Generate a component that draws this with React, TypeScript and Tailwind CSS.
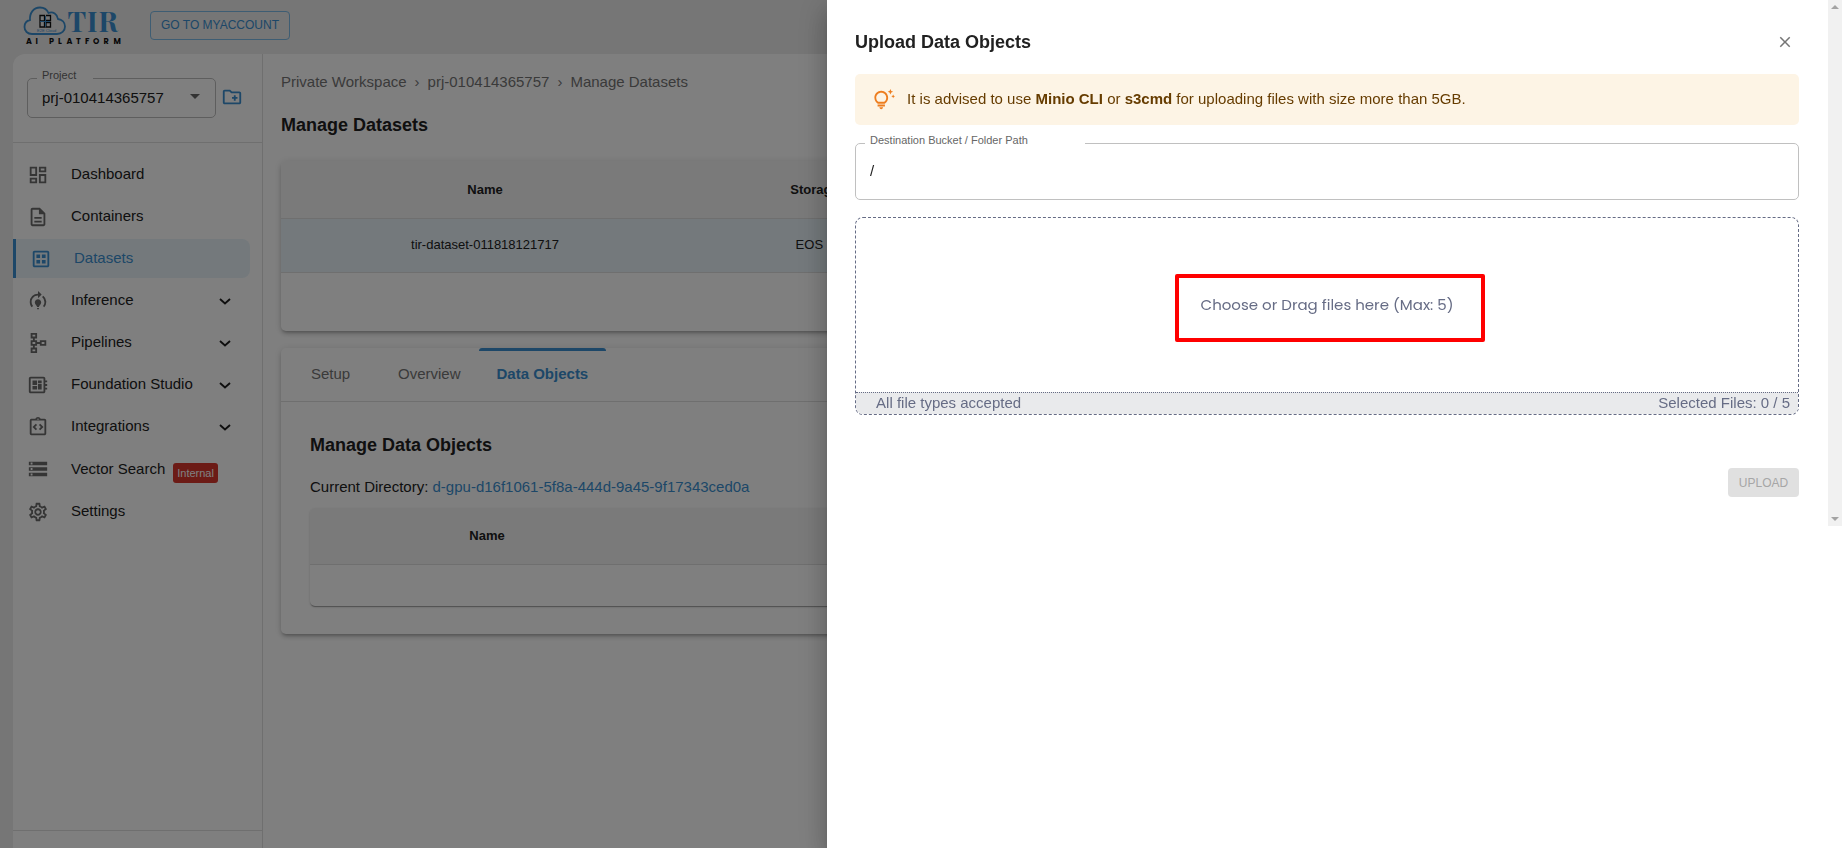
import React from "react";
import {
  MdClose,
  MdOutlineCreateNewFolder,
  MdOutlineDashboard,
  MdOutlineDataset,
  MdOutlineDescription,
  MdOutlineDeveloperBoard,
  MdOutlineIntegrationInstructions,
  MdOutlineModelTraining,
  MdOutlineSchema,
  MdOutlineSettings,
  MdOutlineTipsAndUpdates,
  MdStorage,
} from "react-icons/md";
import type { IconType } from "react-icons";

type NavItem = {
  label: string;
  icon: IconType;
  active?: boolean;
  expandable?: boolean;
  badge?: string;
};

const navItems: NavItem[] = [
  { label: "Dashboard", icon: MdOutlineDashboard },
  { label: "Containers", icon: MdOutlineDescription },
  { label: "Datasets", icon: MdOutlineDataset, active: true },
  { label: "Inference", icon: MdOutlineModelTraining, expandable: true },
  { label: "Pipelines", icon: MdOutlineSchema, expandable: true },
  { label: "Foundation Studio", icon: MdOutlineDeveloperBoard, expandable: true },
  { label: "Integrations", icon: MdOutlineIntegrationInstructions, expandable: true },
  { label: "Vector Search", icon: MdStorage, badge: "Internal" },
  { label: "Settings", icon: MdOutlineSettings },
];

const cardShadow =
  "shadow-[0_3px_3px_-2px_rgba(0,0,0,0.2),0_3px_4px_0_rgba(0,0,0,0.14),0_1px_8px_0_rgba(0,0,0,0.12)]";

function Logo() {
  return (
    <svg width="102" height="44" viewBox="0 0 102 44" role="img" aria-label="TIR AI Platform">
      <path
        d="M10 31C5.500 31 2.500 28 2.500 24C2.500 20.500 4.500 17.800 8 17C7.500 10 11.500 4.500 18 4.500C22 4.500 25 6.500 26.500 10C31 8 35.500 11.500 36 16C40 16.500 43 19.500 43 23.500C43 28 39.500 31 35 31Z"
        fill="none"
        stroke="#3a8fd0"
        strokeWidth="1.800"
      />
      <path
        d="M18 12.500H22.500V18H18ZM22.500 18V24H18V18.500M24 12.500H28.500V17.500H24M24 19.500H28.500V24H24Z"
        fill="none"
        stroke="#111111"
        strokeWidth="1.300"
      />
      <path d="M23.500 13V24M18 18.500H28" stroke="#3a8fd0" strokeWidth="1" />
      <text x="15" y="28.500" fontFamily="Liberation Sans" fontSize="4" fill="#3a8fd0">
        E2E Cloud
      </text>
      <text
        x="45.500 65 76.500"
        y="28.500"
        fontFamily="'Playfair Display', 'Liberation Serif', serif"
        fontWeight="700"
        fontSize="28"
        fill="#3a8fd0"
      >
        TIR
      </text>
      <text
        x="4 13.500 27 36 44.500 54 63 71 81.500 91.500"
        y="41"
        fontFamily="Poppins, 'Liberation Sans', sans-serif"
        fontWeight="700"
        fontSize="8"
        fill="#111111"
      >
        AIPLATFORM
      </text>
    </svg>
  );
}

function Chevron() {
  return (
    <svg width="20" height="20" viewBox="0 0 20 20" fill="none" aria-hidden="true">
      <path d="M5 8L10 12.500L15 8" stroke="#1f1f1f" strokeWidth="1.900" />
    </svg>
  );
}

function Sidebar() {
  return (
    <aside className="flex w-[250px] shrink-0 flex-col rounded-tl-xl border-r border-[#dedede] bg-white">
      <div className="flex h-[89px] items-start gap-[5px] border-b border-[#dedede] pt-6 pl-[14px]">
        <div className="relative">
          <label
            htmlFor="project"
            className="absolute -top-[9px] left-[10px] w-14 bg-white pl-[5px] text-[11px] leading-3 text-[#666666]"
          >
            Project
          </label>
          <select
            id="project"
            className="h-10 w-[189px] appearance-none rounded-[5px] border border-[#bdbdbd] bg-white px-[14px] text-[15px] text-[#212121]"
          >
            <option>prj-010414365757</option>
          </select>
          <svg
            className="pointer-events-none absolute top-4 right-4"
            width="10"
            height="5"
            viewBox="0 0 10 5"
            aria-hidden="true"
          >
            <path d="M0 0H10L5 5Z" fill="#666666" />
          </svg>
        </div>
        <button type="button" aria-label="Create project" className="mt-2 text-[#3a8fd0]">
          <MdOutlineCreateNewFolder size={22} />
        </button>
      </div>
      <nav className="mr-3 flex flex-1 flex-col gap-[3px] pt-3">
        {navItems.map(({ label, icon: Icon, active, expandable, badge }) => (
          <a
            key={label}
            href="#"
            className={
              active
                ? "flex h-[39px] items-center gap-[22px] rounded-r-lg border-l-3 border-[#3a8fd0] bg-[#e8f3f9] pr-[15px] pl-[14px] text-[15px] text-[#3a8fd0]"
                : badge
                  ? "flex h-10 items-center gap-[22px] pr-[15px] pl-[14px] text-[15px] text-[#212121]"
                  : "flex h-[39px] items-center gap-[22px] pr-[15px] pl-[14px] text-[15px] text-[#212121]"
            }
          >
            <Icon size={22} className={active ? "shrink-0" : "shrink-0 text-[#6b6b6b]"} />
            <span>{label}</span>
            {badge && (
              <span className="-ml-[14px] mb-[6px] self-end rounded-[3px] bg-[#d9362c] px-1 text-[11px] leading-5 text-white">
                {badge}
              </span>
            )}
            {expandable && (
              <span className="ml-auto">
                <Chevron />
              </span>
            )}
          </a>
        ))}
      </nav>
      <div className="h-[18px] border-t border-[#dedede]" />
    </aside>
  );
}

function DatasetsTable() {
  return (
    <div className={`mt-[22px] overflow-hidden rounded-[5px] bg-white pb-[58px] ${cardShadow}`}>
      <table className="w-full table-fixed border-collapse text-[13px] text-[#212121]">
        <thead>
          <tr className="h-[57px] border-b border-[#dedede] bg-[#f5f5f5]">
            <th className="w-[408px]">Name</th>
            <th className="w-[284px]">Storage Type</th>
            <th />
          </tr>
        </thead>
        <tbody>
          <tr className="h-[54px] border-b border-[#dedede] bg-[#e8f3f9] text-center">
            <td>tir-dataset-011818121717</td>
            <td>EOS Bucket</td>
            <td />
          </tr>
        </tbody>
      </table>
    </div>
  );
}

function DatasetDetails() {
  return (
    <section className={`mt-[17px] overflow-hidden rounded-[5px] bg-white ${cardShadow}`}>
      <div role="tablist" className="flex h-[54px] border-b border-[#dedede] text-[15px] text-[#757575]">
        <button type="button" role="tab" aria-selected="false" className="w-[99px]">
          Setup
        </button>
        <button type="button" role="tab" aria-selected="false" className="px-[18px]">
          Overview
        </button>
        <button
          type="button"
          role="tab"
          aria-selected="true"
          className="relative px-[18px] font-bold text-[#3a8fd0]"
        >
          Data Objects
          <span className="absolute inset-x-0 top-0 h-[3px] rounded-t-sm bg-[#3a8fd0]" />
        </button>
      </div>
      <div className="px-[29px] pt-[29px] pb-7">
        <h2 className="text-lg leading-7 font-bold text-[#212121]">Manage Data Objects</h2>
        <p className="mt-4 text-[15px] leading-6 text-[#212121]">
          Current Directory:{" "}
          <a href="#" className="text-[#3a8fd0]">
            d-gpu-d16f1061-5f8a-444d-9a45-9f17343ced0a
          </a>
        </p>
        <div className="mt-[9px] overflow-hidden rounded-[5px] bg-white pb-[41px] shadow-[0_2px_1px_-1px_rgba(0,0,0,0.2),0_1px_1px_0_rgba(0,0,0,0.14),0_1px_3px_0_rgba(0,0,0,0.12)]">
          <table className="w-full table-fixed border-collapse text-[13px] text-[#212121]">
            <thead>
              <tr className="h-[57px] border-b border-[#dedede] bg-[#f5f5f5]">
                <th className="w-[354px]">Name</th>
                <th />
              </tr>
            </thead>
          </table>
        </div>
      </div>
    </section>
  );
}

function UploadDrawer() {
  return (
    <div
      role="dialog"
      aria-labelledby="drawer-title"
      className="fixed inset-y-0 right-0 flex w-[55.1%] items-start bg-white shadow-[0_8px_10px_-5px_rgba(0,0,0,0.2),0_16px_24px_2px_rgba(0,0,0,0.14),0_6px_30px_5px_rgba(0,0,0,0.12)]"
    >
      <div className="min-w-0 flex-1 pt-7 pr-[29px] pl-7">
        <div className="flex items-center justify-between">
          <h2 id="drawer-title" className="text-lg leading-7 font-bold text-[#212121]">
            Upload Data Objects
          </h2>
          <button type="button" aria-label="Close" className="mr-[5px] text-[#757575]">
            <MdClose size={18} />
          </button>
        </div>

        <div
          role="note"
          className="mt-[18px] flex h-[51px] items-center gap-3 rounded-[5px] bg-[#fdf4e5] px-[18px] text-[15px] text-[#663c00]"
        >
          <MdOutlineTipsAndUpdates size={22} className="shrink-0 text-[#ed7d1f]" />
          <p>
            It is advised to use <strong>Minio CLI</strong> or <strong>s3cmd</strong> for uploading files with
            size more than 5GB.
          </p>
        </div>

        <div className="relative mt-[18px]">
          <label
            htmlFor="destination"
            className="absolute -top-[9px] left-[10px] w-[220px] bg-white pl-[5px] text-[11px] leading-3 text-[#666666]"
          >
            Destination Bucket / Folder Path
          </label>
          <input
            id="destination"
            type="text"
            defaultValue="/"
            className="block h-[57px] w-full rounded-[5px] border border-[#c0c0c0] px-[14px] pb-[2px] text-[15px] text-[#212121]"
          />
        </div>

        <div className="mt-[17px] overflow-hidden rounded-lg border border-dashed border-[#666c85] text-[15px] text-[#666c85]">
          <label className="flex h-[174px] cursor-pointer items-center justify-center">
            <input type="file" multiple className="sr-only" />
            <span className="relative font-[Poppins,Inter,sans-serif] text-[15px] leading-6">
              Choose or Drag files here (Max: 5)
              <span className="absolute -top-[19px] -right-[31px] -bottom-[25px] -left-[26px] rounded-xs border-4 border-[#ff0000]" />
            </span>
          </label>
          <div className="flex h-[22px] items-center justify-between border-t border-dotted border-[#666c85] bg-[#e9eaec] pr-2 pl-5">
            <span>All file types accepted</span>
            <span>Selected Files: 0 / 5</span>
          </div>
        </div>

        <div className="mt-[53px] flex justify-end">
          <button
            type="button"
            disabled
            className="h-[29px] w-[71px] rounded-[4px] bg-[#e0e0e0] text-xs text-[#a6a6a6]"
          >
            UPLOAD
          </button>
        </div>
      </div>

      <div className="flex h-[526px] w-[14px] shrink-0 flex-col items-center justify-between bg-[#f1f1f1] py-[5px]">
        <svg width="8" height="4" viewBox="0 0 8 4" aria-hidden="true">
          <path d="M0 4H8L4 0Z" fill="#a3a3a3" />
        </svg>
        <svg width="8" height="4" viewBox="0 0 8 4" aria-hidden="true">
          <path d="M0 0H8L4 4Z" fill="#a3a3a3" />
        </svg>
      </div>
    </div>
  );
}

export default function App() {
  return (
    <div className="flex h-screen flex-col overflow-hidden bg-[#ececec] font-['Liberation_Sans',Arial,sans-serif]">
      <header className="flex h-[54px] shrink-0 items-center gap-[26px] pb-1 pl-[22px]">
        <Logo />
        <button
          type="button"
          className="h-[29px] w-[140px] rounded-[4px] border border-[#7cbbe6] text-xs text-[#3a8fd0]"
        >
          GO TO MYACCOUNT
        </button>
      </header>
      <div className="flex min-h-0 flex-1 pl-[13px]">
        <Sidebar />
        <main className="min-w-0 flex-1 bg-white px-[18px] pt-4">
          <nav aria-label="Breadcrumb" className="flex gap-2 text-[15px] leading-6 text-[#757575]">
            <a href="#">Private Workspace</a>
            <span>›</span>
            <a href="#">prj-010414365757</a>
            <span>›</span>
            <span>Manage Datasets</span>
          </nav>
          <h1 className="mt-[17px] text-lg leading-7 font-bold text-[#212121]">Manage Datasets</h1>
          <DatasetsTable />
          <DatasetDetails />
        </main>
      </div>
      <div className="fixed inset-0 bg-black/50" />
      <UploadDrawer />
    </div>
  );
}
